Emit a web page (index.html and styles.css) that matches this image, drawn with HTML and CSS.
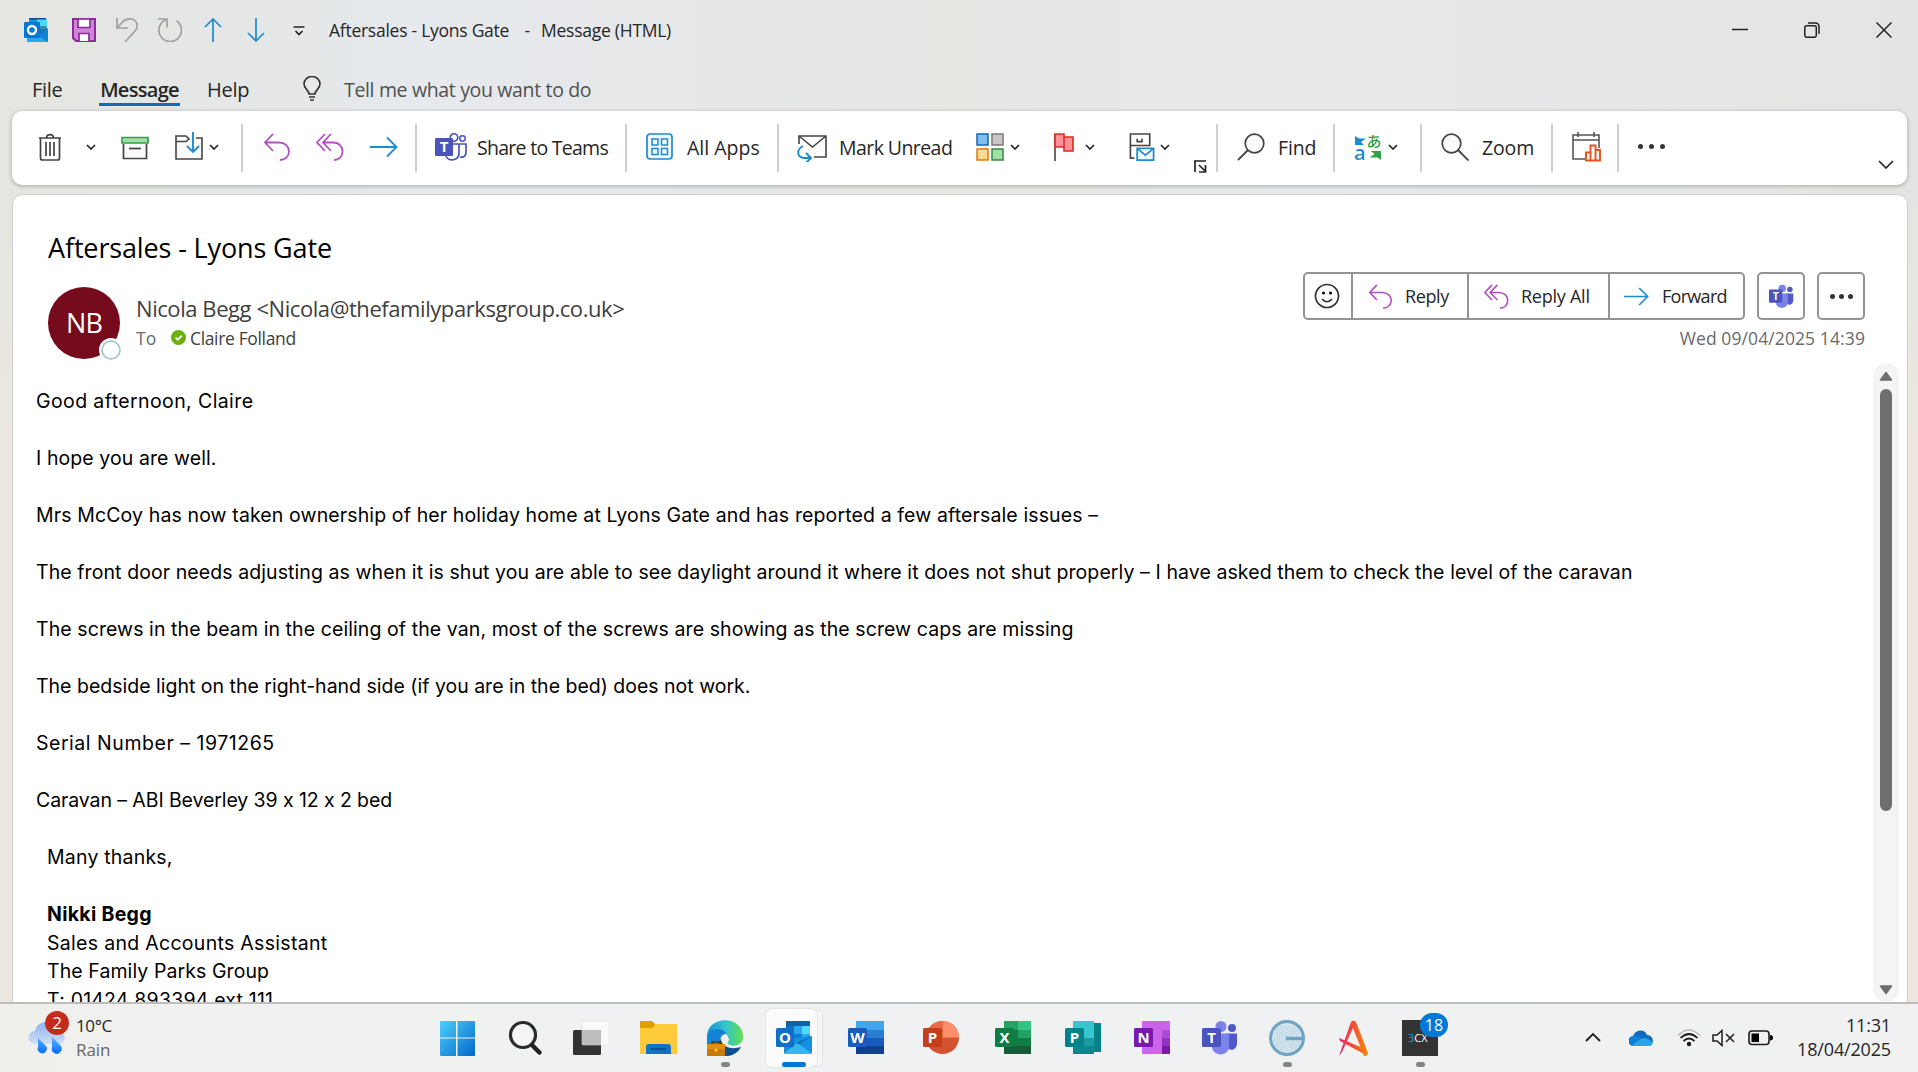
FILE: index.html
```html
<!DOCTYPE html>
<html lang="en">
<head>
  <meta charset="UTF-8" />
  <title>Aftersales - Lyons Gate - Message (HTML)</title>
  <link rel="stylesheet" href="styles.css">
</head>
<body>

<!-- shared icons -->
<svg class="defs">
  <symbol id="chev" viewBox="0 0 10 6"><path d="M1 1l4 4 4-4" fill="none" stroke="#262626" stroke-width="1.7"/></symbol>
  <symbol id="reply" viewBox="0 0 28 28"><path d="M10 1L2 9.500l8 8.500M2 9.500h14c6 0 10 4 10 9s-4 8.500-9 8.500" fill="none" stroke="#b14fc0" stroke-width="1.8"/></symbol>
  <symbol id="replyall" viewBox="0 0 28 28"><path d="M9 1L1 9.500l8 8.500M15 1L7 9.500l8 8.500M7 9.500h10c6 0 9.500 4 9.500 9s-3.500 8.500-8.500 8.500" fill="none" stroke="#b14fc0" stroke-width="1.8"/></symbol>
  <symbol id="forward" viewBox="0 0 28 28"><path d="M0 14h27M17 4.500L26.500 14 17 23.500" fill="none" stroke="#1e8bcd" stroke-width="1.8"/></symbol>
  <symbol id="arrow" viewBox="0 0 24 24"><path d="M12 24V1M4 9l8-8 8 8" fill="none" stroke="#1e8bcd" stroke-width="1.7"/></symbol>
  <symbol id="outlook" viewBox="0 0 36 34">
    <path d="M10 0h23a1 1 0 0 1 1 1v14H10z" fill="#0a64ad"/>
    <path d="M10 5h8v8h-8z" fill="#0d6fc0"/><path d="M18 5h8v8h-8z" fill="#28a8ea"/><path d="M26 5h8v8h-8z" fill="#50d9ff"/>
    <path d="M10 13h16v8H10z" fill="#0f78d4"/><path d="M26 13h8v6h-8z" fill="#28a8ea"/>
    <path d="M8 18l28-3v16a2 2 0 0 1-2 2H10a2 2 0 0 1-2-2z" fill="#1490df"/>
    <path d="M36 15L8 32.500V31l14-10z" fill="#0f6fbe"/><path d="M8 32l13-10 15 10.500-2 .5H10z" fill="#35b8f1"/>
    <rect y="7" width="18" height="19" rx="1.500" fill="#0f6fc9"/>
    <text x="9" y="21.500" class="app-letter">O</text>
  </symbol>
  <symbol id="outlook-small" viewBox="0 0 24 24">
    <path d="M5 0h17v11H5z" fill="#1490df"/><path d="M13 1h10v10H13z" fill="#50d9ff"/><path d="M5 0h17v1.500H5z" fill="#0a4f94"/>
    <path d="M3 11h21v13H3z" fill="#28a8ea"/><path d="M24 11v13L13 17z" fill="#1482d8"/><path d="M24 11l-10 6-1-3V8h9z" fill="#123f74" opacity=".5"/>
    <rect y="4" width="16" height="16" rx="1" fill="#0078d4"/><circle cx="8" cy="12" r="4" fill="none" stroke="#fff" stroke-width="2.400"/>
  </symbol>
  <symbol id="teams" viewBox="0 0 36 34">
    <circle cx="19" cy="5.500" r="5.500" fill="#7b83eb"/><circle cx="30" cy="7" r="4" fill="#5059c9"/>
    <path d="M24 12.500h11v9.500c0 9-11 9-11 0z" fill="#5059c9"/>
    <path d="M11 12.500h16V25c0 11-16 11-17 1z" fill="#7b83eb"/>
    <rect y="7" width="19" height="19" rx="1.500" fill="#4b53bc"/>
    <text x="9.500" y="21.500" class="app-letter">T</text>
  </symbol>
</svg>

<div class="window">
  <header class="titlebar">
    <div class="quick">
      <svg class="i24 first"><use href="#outlook-small"/></svg>
      <svg class="i24" viewBox="0 0 24 24"><path d="M1 1h22v22H4l-3-3z" fill="#cf86d4" stroke="#8e2b9b" stroke-width="2"/><path d="M6 1h12v8.500H6zM7 23v-7.500h10V23" fill="#fff" stroke="#8e2b9b" stroke-width="1.700"/></svg>
      <svg class="i24" viewBox="0 0 24 24"><path d="M2 0v10h11M2 10l6-6.500c8-7 19 1 12 9.500L10 24" fill="none" stroke="#a0a0a0" stroke-width="1.700"/></svg>
      <svg class="i24" viewBox="0 0 24 24"><path d="M0 1h9v8.500M8.500 1.500A11.300 11.300 0 1 0 18.500 2.800" fill="none" stroke="#a0a0a0" stroke-width="1.700"/></svg>
      <svg class="i24"><use href="#arrow"/></svg>
      <svg class="i24 flip"><use href="#arrow"/></svg>
      <svg class="i24" viewBox="0 0 24 24"><path d="M6.500 9h11M8.500 13l3.500 3.500 3.500-3.500" fill="none" stroke="#222" stroke-width="1.700"/></svg>
    </div>
    <div class="title">Aftersales - Lyons Gate <span>-</span> <span>Message (HTML)</span></div>
    <div class="controls">
      <svg viewBox="0 0 16 16"><path d="M0 7.500h16"/></svg>
      <svg viewBox="0 0 16 16"><rect x=".8" y="3.800" width="11.500" height="11.500" rx="2"/><path d="M4 1h7q4 0 4 4v7"/></svg>
      <svg viewBox="0 0 16 16"><path d="M.5.500l15 15M15.500.500l-15 15"/></svg>
    </div>
  </header>

  <nav class="tabs">
    <a class="tab file">File</a>
    <a class="tab active">Message</a>
    <a class="tab help">Help</a>
    <svg class="bulb" viewBox="0 0 18 25"><path d="M6 18c0-4-5-5-5-10a8 7.500 0 0 1 16 0c0 5-5 6-5 10zM6 21h6M7 24h4" fill="none" stroke="#333" stroke-width="1.600"/></svg>
    <span class="tell">Tell me what you want to do</span>
  </nav>

  <div class="ribbon">
    <div class="group g-delete">
      <svg class="i28" viewBox="0 0 28 28"><path d="M3 5h22M10.500 5c0-4.500 7-4.500 7 0M4.500 5v20q0 2 2 2h15q2 0 2-2V5M10 9v14M14 9v14M18 9v14" fill="none" stroke="#444" stroke-width="1.700"/></svg>
      <svg class="chev c1"><use href="#chev"/></svg>
      <svg class="i28 archive" viewBox="0 0 28 28"><path d="M2.500 11v14.500h23V11" fill="#fafafa" stroke="#444" stroke-width="1.700"/><path d="M1 4.500h26v5.500H1z" fill="#a1dfa9" stroke="#3a9a4a" stroke-width="1.700"/><path d="M8 15.500h12" stroke="#444" stroke-width="1.700"/></svg>
      <svg class="i28 move" viewBox="0 0 28 28"><path d="M16 6h11v21H1V4h10l3 3-3 2.500H1" fill="#fafafa" stroke="#444" stroke-width="1.600"/><path d="M15 2h6v8h-6z" fill="#fff"/><path d="M18 0v20M12 14l6 6 6-6" fill="none" stroke="#1e8bcd" stroke-width="1.900"/></svg>
      <svg class="chev c2"><use href="#chev"/></svg>
    </div>
    <div class="group g-respond">
      <svg class="i28"><use href="#reply"/></svg>
      <svg class="i28"><use href="#replyall"/></svg>
      <svg class="i28 fwd"><use href="#forward"/></svg>
    </div>
    <div class="group g-teams">
      <svg class="i32" viewBox="0 0 32 28"><circle cx="19" cy="4.500" r="3.800" fill="none" stroke="#4b53bc" stroke-width="1.700"/><circle cx="27.500" cy="5.500" r="2.700" fill="none" stroke="#4b53bc" stroke-width="1.500"/><path d="M18 11h6v9c0 8-11 9-13 3M25 11h6v8q0 6-6 5" fill="none" stroke="#4b53bc" stroke-width="1.700"/><rect y="5" width="18" height="18" rx="1" fill="#4b53bc"/><text x="9" y="19" class="app-letter">T</text></svg>
      <span class="w-share">Share to Teams</span>
    </div>
    <div class="group g-apps">
      <svg class="i28" viewBox="0 0 28 28"><rect x="1" y="1" width="25" height="25" rx="3" fill="#f2f9fe" stroke="#1e8bcd" stroke-width="1.700"/><path d="M6 6h6v6H6zM15.500 6h6v6h-6zM6 15.500h6v6H6zM15.500 15.500h6v6h-6z" fill="none" stroke="#1e8bcd" stroke-width="1.500"/></svg>
      <span class="w-apps">All Apps</span>
    </div>
    <div class="group g-tags">
      <svg class="i30" viewBox="0 0 30 30"><path d="M2 12V4h27v21H17M2 4l13.500 11L29 4" fill="none" stroke="#444" stroke-width="1.600"/><path d="M6 14c-6 3-7 11 1 12h6M9 21l5 5-5 5" fill="none" stroke="#1e8bcd" stroke-width="1.900"/></svg>
      <span class="w-unread">Mark Unread</span>
      <svg class="i28 cat" viewBox="0 0 28 28"><g stroke-width="1.500"><path d="M1 1h11v11H1z" fill="#83beec" stroke="#1067b8"/><path d="M16 1h11v11H16z" fill="#c8c6c4" stroke="#7a7874"/><path d="M1 16h11v11H1z" fill="#f8db8f" stroke="#e07a10"/><path d="M16 16h11v11H16z" fill="#a1dfa9" stroke="#378a44"/></g></svg>
      <svg class="chev c3"><use href="#chev"/></svg>
      <svg class="i28 flag" viewBox="0 0 28 28"><path d="M5 1v27" stroke="#444" stroke-width="1.600"/><path d="M5 1h9v3h9v14h-9v-4H5z" fill="#ff9198" stroke="#d92c20" stroke-width="1.600"/><path d="M14 4v10" stroke="#d92c20" stroke-width="1.500"/></svg>
      <svg class="chev c4"><use href="#chev"/></svg>
      <svg class="i28 rules" viewBox="0 0 28 29"><path d="M6 26H2V1h20v12H2M9 6v3h5V6" fill="none" stroke="#444" stroke-width="1.700"/><path d="M9 16h17v12H9zM9 16l8.500 7L26 16" fill="#eef8ff" stroke="#1e8bcd" stroke-width="1.800"/></svg>
      <svg class="chev c5"><use href="#chev"/></svg>
      <svg class="launcher" viewBox="0 0 13 13"><path d="M1 12V1h11M5 5l6 6M11.500 5v7H5" fill="none" stroke="#222" stroke-width="1.700"/></svg>
    </div>
    <div class="group g-find">
      <svg class="i28" viewBox="0 0 28 28"><circle cx="17.500" cy="10.500" r="9.300" fill="#fafafa" stroke="#444" stroke-width="1.700"/><path d="M11 17L1 27" stroke="#444" stroke-width="1.800"/></svg>
      <span class="w-find">Find</span>
    </div>
    <div class="group g-lang">
      <svg class="i28 lang" viewBox="0 0 28 28"><text x="12.500" y="14" class="kana">あ</text><text x="0" y="27" class="latin">a</text><path d="M1 3v9h9l-3-3 5-3.500H5z" fill="#1e8bcd"/><path d="M27 27v-9H17l3.500 3-5 3.500h8z" fill="#33a04a"/></svg>
      <svg class="chev c6"><use href="#chev"/></svg>
    </div>
    <div class="group g-zoom">
      <svg class="i28" viewBox="0 0 28 28"><circle cx="10.500" cy="10.500" r="9.300" fill="#fafafa" stroke="#444" stroke-width="1.700"/><path d="M17 17l10.500 10.500" stroke="#444" stroke-width="1.800"/></svg>
      <span class="w-zoom">Zoom</span>
    </div>
    <div class="group g-cal">
      <svg class="i30" viewBox="0 0 30 30"><path d="M14 27H2V3h26v13M2 8h26M7 0v5M23 0v5" fill="none" stroke="#555" stroke-width="1.600"/><path d="M15 28.500v-8h4.500v-7h5V18H29v10.500zM19.500 20v8M24.500 18v10" fill="#fff" stroke="#e8511c" stroke-width="1.900"/></svg>
    </div>
    <div class="more"><i></i><i></i><i></i></div>
    <svg class="collapse" viewBox="0 0 16 9"><path d="M1 1l7 7 7-7" fill="none" stroke="#262626" stroke-width="1.700"/></svg>
  </div>

  <main class="mail">
    <h1>Aftersales - Lyons Gate</h1>
    <section class="head">
      <div class="avatar">NB<span class="presence"></span></div>
      <div class="who">
        <div class="from">Nicola Begg &lt;Nicola@thefamilyparksgroup.co.uk&gt;</div>
        <div class="to"><span class="label">To</span>
          <svg class="ok" viewBox="0 0 15 15"><circle cx="7.500" cy="7.500" r="7.500" fill="#6bb00a"/><path d="M4.500 7.500l2.200 2.200 4-4" fill="none" stroke="#fff" stroke-width="1.700"/></svg>
          <span class="person">Claire Folland</span></div>
      </div>
      <div class="side">
        <div class="actions">
          <div class="btns">
            <button class="b-smile"><svg viewBox="0 0 26 26" width="26" height="26"><g fill="none" stroke="#333" stroke-width="1.700"><circle cx="13" cy="13" r="11.500"/><path d="M8 16q5 5.500 10 0"/></g><circle cx="9.500" cy="10" r="1.500"/><circle cx="16.500" cy="10" r="1.500"/></svg></button>
            <button class="b-reply"><svg class="i25"><use href="#reply"/></svg><span>Reply</span></button>
            <button class="b-all"><svg class="i25"><use href="#replyall"/></svg><span>Reply All</span></button>
            <button class="b-fwd"><svg class="i25"><use href="#forward"/></svg><span>Forward</span></button>
          </div>
          <button class="square"><svg width="25" height="25"><use href="#teams"/></svg></button>
          <button class="square dots"><i></i><i></i><i></i></button>
        </div>
        <div class="date">Wed 09/04/2025 14:39</div>
      </div>
    </section>

    <div class="reading">
      <article>
        <p class="l1">Good afternoon, Claire</p>
        <p class="l2">I hope you are well.</p>
        <p class="l3">Mrs McCoy has now taken ownership of her holiday home at Lyons Gate and has reported a few aftersale issues –</p>
        <p class="l4">The front door needs adjusting as when it is shut you are able to see daylight around it where it does not shut properly – I have asked them to check the level of the caravan</p>
        <p class="l5">The screws in the beam in the ceiling of the van, most of the screws are showing as the screw caps are missing</p>
        <p class="l6">The bedside light on the right-hand side (if you are in the bed) does not work.</p>
        <p class="l7">Serial Number – 1971265</p>
        <p class="l8">Caravan – ABI Beverley 39 x 12 x 2 bed</p>
        <div class="signature">
          <p>Many thanks,</p>
          <div class="name">Nikki Begg</div>
          <div class="role">Sales and Accounts Assistant</div>
          <div class="company">The Family Parks Group</div>
          <div class="phone">T: 01424 893394 ext 111</div>
        </div>
      </article>
      <div class="scrollbar">
        <svg viewBox="0 0 14 10"><path d="M7 1.500L12.500 9h-11z"/></svg>
        <div class="thumb"></div>
        <svg class="down" viewBox="0 0 14 10"><path d="M7 1.500L12.500 9h-11z"/></svg>
      </div>
    </div>
  </main>
</div>

<footer class="taskbar">
  <div class="weather">
    <svg viewBox="0 0 38 36" width="38" height="36">
      <defs><linearGradient id="cl" x2="0" y2="1"><stop stop-color="#8fb2ee"/><stop offset="1" stop-color="#cfdef7"/></linearGradient><linearGradient id="dr" x2="0" y2="1"><stop stop-color="#55b4ff"/><stop offset="1" stop-color="#0a6cff"/></linearGradient></defs>
      <path d="M7 24a6.500 6.500 0 0 1 0-13C9 0 26-1 28 9c11 1 11 15 3 15z" fill="url(#cl)"/>
      <path d="M10 18l7 7a4.600 4.600 0 1 1-7 2zM24 17l8 8a5 5 0 1 1-8 2z" fill="url(#dr)"/>
    </svg>
    <span class="badge red">2</span>
    <div><div class="temp">10°C</div><div class="cond">Rain</div></div>
  </div>

  <div class="apps">
    <div class="app"><svg viewBox="0 0 36 36"><defs><linearGradient id="wn" x2="1" y2="1"><stop stop-color="#4fd0ff"/><stop offset="1" stop-color="#0067c8"/></linearGradient></defs><path d="M2 1h15v16.500H1V2q0-1 1-1zM18.500 1H35q1 0 1 1v15.500H18.500zM1 18.500h16V36H2q-1 0-1-1zM18.500 18.500H36V35q0 1-1 1H18.500z" fill="url(#wn)"/></svg></div>
    <div class="app a2"><svg viewBox="0 0 36 36"><circle cx="16" cy="15" r="12.500" fill="#f5f5f5" stroke="#2b2b2b" stroke-width="3.200"/><path d="M25 25l7.500 7.500" stroke="#222" stroke-width="4.500" stroke-linecap="round"/></svg></div>
    <div class="app a3"><svg viewBox="0 0 36 36"><rect y="10" width="28" height="25" rx="1.500" fill="#333"/><rect x="9" y="1" width="27" height="24" rx="1.500" fill="#fafafa" stroke="#ddd" stroke-width=".6"/><path d="M9 10h19v15H9z" fill="#bdbdbd"/></svg></div>
    <div class="app a4"><svg class="wide" viewBox="0 0 38 36"><path d="M1 2q0-1 1-1h11l3 3v6H1z" fill="#dda000"/><path d="M1 8h12l4-4h20q1 0 1 1v29H1z" fill="#ffcb3a"/><path d="M7 34V27q0-3 3-3h19q3 0 3 3v7z" fill="#1173c5"/><path d="M12 29h15" stroke="#0a4f8e" stroke-width="1.800"/></svg></div>
    <div class="app a5 running"><svg viewBox="0 0 36 36"><defs><linearGradient id="eg"><stop stop-color="#1d93d6"/><stop offset=".5" stop-color="#33c4cf"/><stop offset="1" stop-color="#62e050"/></linearGradient></defs><path d="M0 16C1-5 36-5 36 17c0 8-9 11-15 7-2-2 3-3 0-7C19 10 8 7 0 16z" fill="url(#eg)"/><path d="M0 16c3-9 16-9 20-2-7-1-9 8-4 14H0z" fill="#1482d6"/><path d="M14 18c0 9 10 12 20 9-3 6-10 10-17 9l-5-12z" fill="#104e92"/><path d="M0 24h18v12H0z" fill="#c97a08"/><path d="M0 24h18v5H0z" fill="#e58b10"/><path d="M5 24v-2h8v2" fill="none" stroke="#5b3606" stroke-width="1.500"/><circle cx="9" cy="30" r="1.600" fill="#ffd740"/></svg></div>
    <div class="app a6 current"><svg><use href="#outlook"/></svg></div>
    <div class="app a7"><svg viewBox="0 0 36 34"><path d="M8 0h28v9H8z" fill="#41a5ee"/><path d="M8 9h28v8H8z" fill="#2b7cd3"/><path d="M8 17h28v8H8z" fill="#185abd"/><path d="M8 25h28v8H8z" fill="#103f91"/><rect y="7" width="19" height="19" rx="1.500" fill="#185abd"/><text x="9.500" y="21.500" class="app-letter">W</text></svg></div>
    <div class="app a8"><svg viewBox="0 0 36 34"><circle cx="19.500" cy="16.500" r="16.500" fill="#d35230"/><path d="M19.500 0A16.500 16.500 0 0 1 36 16.500H19.500z" fill="#ff8f6b"/><path d="M19.500 0v16.500H3A16.500 16.500 0 0 1 19.500 0z" fill="#ed6c47"/><rect y="7" width="19" height="19" rx="1.500" fill="#c43e1c"/><text x="9.500" y="21.500" class="app-letter">P</text></svg></div>
    <div class="app a9"><svg viewBox="0 0 36 34"><path d="M9 0h14v9H9z" fill="#21a366"/><path d="M23 0h13v9H23z" fill="#33c481"/><path d="M9 9h14v8H9z" fill="#107c41"/><path d="M23 9h13v8H23z" fill="#21a366"/><path d="M9 17h27v8H9z" fill="#107c41"/><path d="M9 25h27v8H9z" fill="#185c37"/><rect y="7" width="19" height="19" rx="1.500" fill="#107c41"/><text x="9.500" y="21.500" class="app-letter">X</text></svg></div>
    <div class="app a10"><svg viewBox="0 0 36 34"><path d="M28 2h8v29h-8z" fill="#038387"/><path d="M8 0h21v17H8z" fill="#37c6d0"/><path d="M8 17h21v8H8z" fill="#1a9ba1"/><path d="M8 25h21v8H8z" fill="#058a8e"/><rect y="7" width="19" height="19" rx="1.500" fill="#038387"/><text x="9.500" y="21.500" class="app-letter">P</text></svg></div>
    <div class="app a11"><svg viewBox="0 0 36 34"><path d="M8 0h28v33H8z" fill="#ca64ea"/><path d="M28 9h8v8h-8z" fill="#ae4bd5"/><path d="M28 17h8v8h-8z" fill="#9332bf"/><path d="M28 25h8v8h-8z" fill="#7719aa"/><rect y="7" width="19" height="19" rx="1.500" fill="#7719aa"/><text x="9.500" y="21.500" class="app-letter">N</text></svg></div>
    <div class="app a12"><svg><use href="#teams"/></svg></div>
    <div class="app a13 running"><svg viewBox="0 0 36 36"><circle cx="18" cy="18" r="16.500" fill="#bfd7e4" stroke="#6fa5c4" stroke-width="3"/><g fill="none" stroke="#e6f0f5" stroke-width=".9"><circle cx="18" cy="18" r="4"/><circle cx="18" cy="18" r="6.500"/><circle cx="18" cy="18" r="9"/><circle cx="18" cy="18" r="11.500"/><circle cx="18" cy="18" r="14"/></g><path d="M17 18.500h18" stroke="#6fa5c4" stroke-width="3.500"/></svg></div>
    <div class="app a14"><svg viewBox="0 0 36 36"><defs><linearGradient id="ag" gradientUnits="userSpaceOnUse" x1="3" x2="32"><stop stop-color="#e6217a"/><stop offset=".5" stop-color="#f2512f"/><stop offset="1" stop-color="#f58a10"/></linearGradient></defs><path d="M3 36L15 2q2-3 5 0l12 31q0 3-4 3L17 8 6 32zM3 18l24 10 1 6L4 21z" fill="url(#ag)"/></svg></div>
    <div class="app a15 running"><svg viewBox="0 0 36 36"><path d="M0 0h36v36H0z" fill="#333"/><text x="6" y="22" class="cx"><tspan fill="#1aa0e0">3</tspan>CX</text></svg><span class="badge blue">18</span></div>
  </div>

  <div class="tray">
    <svg class="t1" viewBox="0 0 16 10"><path d="M1 9l7-7 7 7" fill="none" stroke="#222" stroke-width="1.900"/></svg>
    <svg class="t2" viewBox="0 0 24 16"><path d="M5 16a5 5 0 0 1-1-10C7-1 16-1 18 5c7 0 8 10 2 11z" fill="#0f6cbd"/><path d="M4 6q4-1 8 2l7 4-14 4C-1 16-1 7 4 6z" fill="#0f7fd8"/><path d="M3 15l9-6q3-2 7 0l5 3q-1 4-4 4H5z" fill="#28a4ea"/></svg>
    <svg class="t3" viewBox="0 0 24 18"><g fill="none" stroke="#1c1c1c" stroke-width="1.700"><path d="M1 6.500q11-11 22 0" stroke="#bbb"/><path d="M3.500 9q8.500-8 17 0M6.500 12q5.500-5 11 0"/></g><circle cx="12" cy="15" r="2.200" fill="#1c1c1c"/></svg>
    <svg class="t4" viewBox="0 0 24 18"><path d="M1 6h4l5-4.500v15L5 12H1zM14 5l8 8M22 5l-8 8" fill="none" stroke="#1c1c1c" stroke-width="1.500"/></svg>
    <svg class="t5" viewBox="0 0 25 16"><rect x="1" y="1" width="20" height="13.500" rx="3" fill="none" stroke="#1c1c1c" stroke-width="1.600"/><path d="M3.500 3.500h7.500v8.500H3.500z"/><path d="M22 5q3 0 3 2.800T22 10.500z"/></svg>
    <div class="clock"><div class="time">11:31</div><div class="day">18/04/2025</div></div>
  </div>
</footer>

</body>
</html>
```

FILE: styles.css
```css
* {
  box-sizing: border-box;
}

body {
  margin: 0;
  width: 1918px;
  height: 1072px;
  overflow: hidden;
  font-family: "Segoe UI", "Open Sans", "Noto Sans", sans-serif;
  color: #262626;
  background: #ece7e1;
}

svg {
  display: block;
  flex: none;
}

.defs {
  display: none;
}

.window {
  height: 1002px;
  display: flex;
  flex-direction: column;
  overflow: hidden;
  background: linear-gradient(180deg, rgba(236, 231, 225, 0) 200px, #ece7e1 420px),
    linear-gradient(90deg, #e5e6e1 0, #e5e7e6 200px, #e6e9ed 420px, #e6e8ea 640px, #e6e7e3 950px, #e7e9e9 1200px, #e6e8ea 1400px, #e4e5e2 1918px);
}

/* title bar */
.titlebar {
  height: 60px;
  display: flex;
  align-items: center;
}

.quick {
  display: flex;
  gap: 19px;
  padding-left: 24px;
}

.i24 {
  width: 24px;
  height: 24px;
}

.first {
  margin-right: 5px;
}

.flip {
  transform: rotate(180deg);
}

.title {
  margin-left: 18px;
  font-size: 17.5px;
  letter-spacing: -0.26px;
  line-height: 24px;
}

.title span {
  margin-left: 11px;
}

.title span + span {
  margin-left: 7px;
}

.controls {
  margin-left: auto;
  padding-right: 26px;
  display: flex;
  gap: 56px;
}

.controls svg {
  width: 16px;
  height: 16px;
  fill: none;
  stroke: #222;
  stroke-width: 1.5;
}

/* tabs */
.tabs {
  height: 51px;
  padding-left: 32px;
  display: flex;
  font-size: 20px;
  line-height: 28px;
  padding-top: 16px;
  white-space: nowrap;
}

.tab {
  height: 30px;
  letter-spacing: -0.3px;
}

.file {
  width: 67px;
}

.active {
  width: 81px;
  font-weight: 600;
  text-align: center;
  letter-spacing: -0.7px;
  border-bottom: 3px solid #0f6cbd;
}

.help {
  margin-left: 27px;
  width: 96px;
  letter-spacing: -0.3px;
}

.bulb {
  width: 18px;
  height: 25px;
}

.tell {
  margin-left: 23px;
  color: #505050;
  font-size: 19.5px;
  letter-spacing: -0.34px;
}

/* ribbon */
.ribbon {
  height: 74px;
  flex: none;
  margin: 0 11px 0 12px;
  padding-top: 13px;
  display: flex;
  background: #fff;
  border-radius: 10px;
  box-shadow: 0 1px 4px rgba(0, 0, 0, 0.28);
  font-size: 19.5px;
  white-space: nowrap;
}

.group {
  height: 48px;
  padding-bottom: 2px;
  display: flex;
  align-items: center;
  border-right: 2px solid #cfcfcf;
}

.group span {
  letter-spacing: -0.15px;
}

.group .w-share {
  letter-spacing: -0.72px;
}

.group .w-apps {
  letter-spacing: 0;
}

.group .w-unread {
  letter-spacing: -0.57px;
}

.i28 {
  width: 28px;
  height: 28px;
}

.i30 {
  width: 30px;
  height: 30px;
}

.i32 {
  width: 32px;
  height: 28px;
}

.chev {
  width: 10px;
  height: 6px;
}

.g-delete { width: 231px; padding-left: 24px; }
.c1 { margin-left: 22px; }
.archive { margin-left: 25px; }
.move { margin-left: 26px; margin-top: -3px; }
.c2 { margin-left: 6px; }
.g-respond { width: 174px; padding-left: 20px; gap: 25px; }
.fwd { margin-left: 1px; }
.g-teams { width: 210px; padding-left: 18px; gap: 10px; }
.g-apps { width: 152px; padding-left: 19px; gap: 13px; }
.g-tags { width: 439px; padding-left: 18px; }
.w-unread { margin-left: 12px; width: 114px; }
.cat { margin-left: 23px; }
.c3 { margin-left: 6px; }
.flag { margin-left: 30px; }
.c4 { margin-left: 7px; }
.rules { margin-left: 33px; }
.c5 { margin-left: 4px; }
.launcher { width: 13px; height: 13px; margin: 39px 0 0 24px; }
.g-find { width: 117px; padding-left: 19px; gap: 13px; }
.g-lang { width: 87px; padding-left: 19px; gap: 6px; }
.g-zoom { width: 131px; padding-left: 19px; gap: 13px; }
.g-cal { width: 66px; padding-left: 18px; }

.lang {
  overflow: visible;
}

.kana {
  font: 500 15px "Noto Sans CJK JP", sans-serif;
  fill: #33a04a;
}

.latin {
  font: 600 20px "Open Sans", sans-serif;
  fill: #1e8bcd;
}

.more {
  display: flex;
  gap: 6px;
  margin: 20px 0 0 19px;
}

.more i,
.dots i {
  width: 5px;
  height: 5px;
  border-radius: 50%;
  background: #333;
}

.collapse {
  width: 16px;
  height: 9px;
  margin: 36px 13px 0 auto;
}

/* message */
.mail {
  flex: 1;
  min-height: 0;
  margin: 9px 10px 0 12px;
  display: flex;
  flex-direction: column;
  background: #fff;
  border: 1px solid #cdcdcd;
  border-bottom: 0;
  border-radius: 10px 10px 0 0;
}

h1 {
  margin: 34px 0 0 35px;
  height: 43px;
  font-size: 27px;
  line-height: 38px;
  font-weight: 400;
  color: #000;
  letter-spacing: -0.14px;
}

.head {
  height: 91px;
  flex: none;
  padding-left: 35px;
  display: flex;
}

.avatar {
  position: relative;
  width: 72px;
  height: 72px;
  margin-top: 15px;
  border-radius: 50%;
  background: #750b1c;
  color: #fff;
  font-size: 27px;
  line-height: 71px;
  text-align: center;
  letter-spacing: -1px;
}

.presence {
  position: absolute;
  right: -3px;
  bottom: -3px;
  width: 24px;
  height: 24px;
  border-radius: 50%;
  border: 2px solid #fff;
  background: #fff;
  box-shadow: inset 0 0 0 2px #a9c4d2;
}

.who {
  margin: 21px 0 0 16px;
  white-space: nowrap;
}

.from {
  font-size: 22px;
  line-height: 30px;
  letter-spacing: -0.43px;
  color: #404040;
}

.to {
  display: flex;
  align-items: center;
  font-size: 17.5px;
  line-height: 30px;
}

.label {
  width: 35px;
  color: #6a6a6a;
}

.ok {
  width: 15px;
  height: 15px;
  margin-top: -2px;
}

.person {
  margin-left: 4px;
  letter-spacing: -0.35px;
  color: #404040;
}

.side {
  margin-left: auto;
  padding-right: 42px;
}

.actions {
  display: flex;
  gap: 12px;
}

.btns {
  display: flex;
  width: 442px;
  height: 48px;
  border: 2px solid #949494;
  border-radius: 5px;
}

button {
  display: flex;
  align-items: center;
  padding: 0;
  background: #fff;
  border: 0;
  font: 18px "Segoe UI", "Open Sans", sans-serif;
  color: #262626;
  letter-spacing: -0.4px;
}

.btns button + button {
  border-left: 2px solid #949494;
}

.btns button {
  background: none;
}

.i25 {
  width: 25px;
  height: 25px;
}

.b-smile { width: 46px; padding-left: 9px; }
.b-reply { width: 116px; padding-left: 15px; gap: 12px; }
.b-all { width: 141px; padding-left: 15px; gap: 12px; letter-spacing: -0.25px; }
.b-fwd { flex: 1; padding-left: 14px; gap: 13px; white-space: nowrap; letter-spacing: -0.7px; }

.square {
  width: 48px;
  height: 48px;
  justify-content: center;
  border: 2px solid #949494;
  border-radius: 5px;
}

.dots {
  gap: 4px;
}

.date {
  margin-top: 5px;
  text-align: right;
  font-size: 17.5px;
  line-height: 26px;
  letter-spacing: 0.1px;
  color: #6a6a6a;
}

.reading {
  flex: 1;
  min-height: 0;
  display: flex;
}

article {
  flex: 1;
  padding: 24px 0 0 23px;
  overflow: hidden;
  white-space: nowrap;
  font: 19.5px/28.5px Aptos, Inter, sans-serif;
  font-feature-settings: "calt" 0;
  color: #000;
}

p {
  margin: 0 0 28.5px;
}

.l1 { letter-spacing: 0.4px; }
.l2 { letter-spacing: 0.08px; }
.l3 { letter-spacing: 0.125px; }
.l4 { letter-spacing: 0.086px; }
.l5 { letter-spacing: 0.085px; }
.l6 { letter-spacing: 0; }
.l7 { letter-spacing: 0.53px; }
.l8 { letter-spacing: -0.09px; }

.signature {
  padding-left: 11px;
  letter-spacing: 0.2px;
}

.name {
  font-weight: 700;
  letter-spacing: 0.3px;
}

.role { letter-spacing: 0.3px; }
.company { letter-spacing: 0.08px; }
.phone { letter-spacing: 0.2px; }

.scrollbar {
  width: 26px;
  margin-right: 8px;
  padding: 7px 0 6px;
  display: flex;
  flex-direction: column;
  align-items: center;
  background: #f4f4f4;
  border-radius: 13px;
}

.scrollbar svg {
  width: 14px;
  height: 12px;
  fill: #6e6e6e;
  stroke: #6e6e6e;
  stroke-width: 1.5;
  stroke-linejoin: round;
}

.scrollbar .down {
  margin-top: auto;
  transform: rotate(180deg);
}

.thumb {
  width: 12px;
  height: 422px;
  margin-top: 7px;
  border-radius: 6px;
  background: #6e6e6e;
}

/* taskbar */
.taskbar {
  height: 70px;
  display: flex;
  background: linear-gradient(90deg, #efefeb, #f1f1f1 200px, #eff1f2 900px, #f1f1f1);
  border-top: 2px solid #bdbdbd;
}

.weather {
  position: relative;
  width: 439px;
  padding: 16px 0 0 28px;
  display: flex;
  gap: 10px;
  font-size: 17px;
  line-height: 24px;
  letter-spacing: -0.4px;
}

.weather > div {
  margin-top: -6px;
}

.cond {
  color: #666;
  letter-spacing: -0.1px;
}

.badge {
  position: absolute;
  height: 24px;
  border-radius: 12px;
  color: #fff;
  text-align: center;
  line-height: 24px;
}

.red {
  left: 45px;
  top: 7px;
  width: 24px;
  background: #c42b1c;
}

.apps {
  display: flex;
}

.app {
  position: relative;
  width: 36px;
  padding-top: 16px;
}

.app svg {
  width: 36px;
  height: 36px;
}

.app .wide {
  width: 38px;
}

.a2 { margin-left: 32px; }
.a3 { margin-left: 30px; }
.a4 { margin-left: 30px; }
.a5 { margin-left: 32px; }
.a6 { margin-left: 33px; }
.a7 { margin-left: 36px; }
.a8 { margin-left: 39px; }
.a9 { margin-left: 36px; }
.a10 { margin-left: 34px; }
.a11 { margin-left: 33px; }
.a12 { margin-left: 32px; }
.a13 { margin-left: 31px; }
.a14 { margin-left: 31px; }
.a15 { margin-left: 30px; }

.current svg {
  position: relative;
}

.current::before {
  content: "";
  position: absolute;
  left: -10px;
  top: 5px;
  width: 51px;
  height: 58px;
  background: #fbfbfb;
  border-radius: 6px;
  box-shadow: 0 0 0 1px #e5e5e5, 6px 0 0 -1px #f7f7f7, 6px 0 0 0 #e3e3e3;
}

.running::after,
.current::after {
  content: "";
  position: absolute;
  left: 14px;
  top: 58px;
  width: 9px;
  height: 5px;
  border-radius: 3px;
  background: #858585;
}

.current::after {
  left: 6px;
  width: 24px;
  background: #0078d7;
}

.app-letter {
  font: bold 15px "Open Sans", sans-serif;
  fill: #fff;
  text-anchor: middle;
}

.cx {
  font: 11px "Open Sans", sans-serif;
  fill: #fff;
}

.blue {
  left: 18px;
  top: 9px;
  width: 28px;
  background: #0078d7;
  font-size: 16px;
}

.tray {
  margin-left: auto;
  padding-right: 27px;
  display: flex;
}

.t1 { width: 16px; height: 10px; margin: 28px 28px 0 0; }
.t2 { width: 24px; height: 16px; margin: 26px 24px 0 0; }
.t3 { width: 24px; height: 18px; margin: 25px 11px 0 0; }
.t4 { width: 24px; height: 18px; margin: 25px 12px 0 0; }
.t5 { width: 25px; height: 16px; margin: 26px 0 0; }

.clock {
  width: 118px;
  padding-top: 9px;
  text-align: right;
  font-size: 18px;
  line-height: 24px;
  letter-spacing: -0.16px;
}
```
